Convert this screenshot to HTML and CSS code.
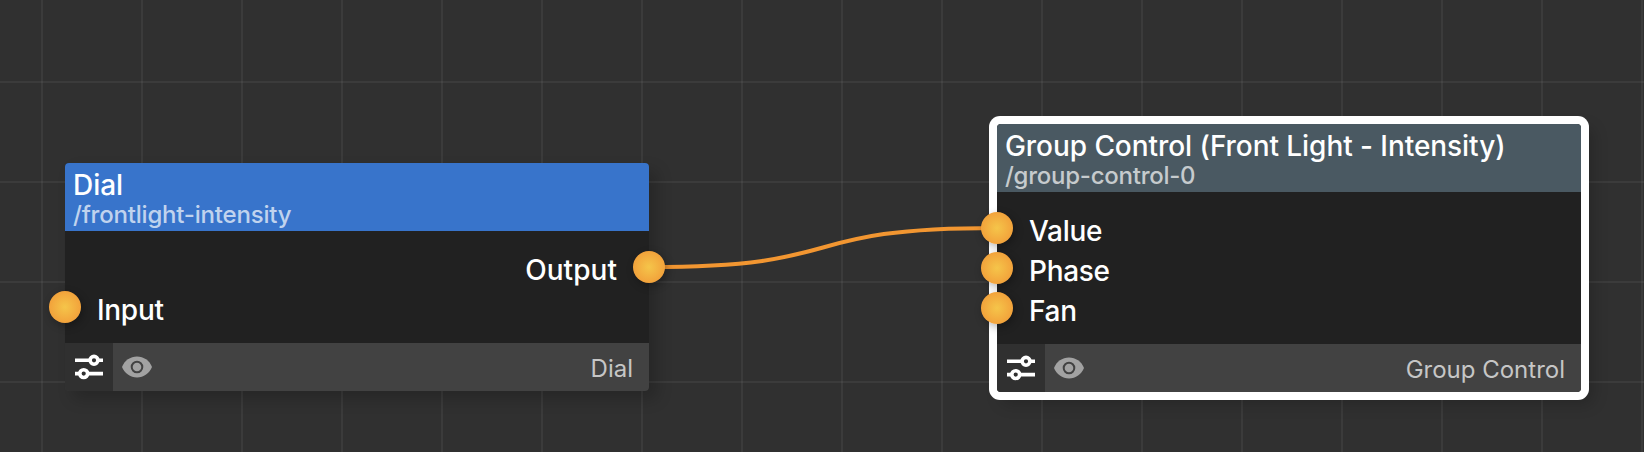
FILE: index.html
```html
<!DOCTYPE html>
<html lang="en">
<head>
<meta charset="utf-8">
<title>Node editor</title>
<link rel="stylesheet" href="styles.css">
</head>
<body>
<svg width="0" height="0" class="defs">
  <symbol id="tune" viewBox="0 0 28 28">
    <g fill="none" stroke="#fff" stroke-width="3.6">
      <path d="M0 7.3H14.5M23.500 7.300H28M0 20.600H4M13 20.600H28"/>
      <circle cx="19" cy="7.3" r="3.9"/>
      <circle cx="8.7" cy="20.6" r="3.9"/>
    </g>
  </symbol>
  <symbol id="eye" viewBox="0 0 30 22">
    <path fill="#a2a2a2" d="M15 .6C8.300 .6 2.500 4.700 0 11c2.500 6.300 8.300 10.400 15 10.400S27.500 17.300 30 11C27.500 4.700 21.700 .6 15 .6z"/>
    <circle cx="15" cy="11" r="5.300" fill="none" stroke="#424242" stroke-width="2"/>
  </symbol>
</svg>
<main class="canvas">
  <svg class="wire" width="1644" height="452"><path d="M649 267C858 267 788 228 997 228"/></svg>

  <section class="node node-dial">
    <header class="head"><div class="title">Dial</div><div class="path path-dial">/frontlight-intensity</div></header>
    <div class="ports">
      <div class="port out"><span class="label">Output</span><i class="socket"></i></div>
      <div class="port"><i class="socket"></i><span class="label">Input</span></div>
    </div>
    <footer class="foot">
      <span class="settings"><svg width="28" height="28"><use href="#tune"/></svg></span>
      <svg class="eye" width="30" height="22"><use href="#eye"/></svg>
      <span class="type">Dial</span>
    </footer>
  </section>

  <section class="node node-group selected">
    <header class="head"><div class="title">Group Control (Front Light - Intensity)</div><div class="path">/group-control-0</div></header>
    <div class="ports">
      <div class="port"><i class="socket"></i><span class="label">Value</span></div>
      <div class="port"><i class="socket"></i><span class="label">Phase</span></div>
      <div class="port"><i class="socket"></i><span class="label">Fan</span></div>
    </div>
    <footer class="foot">
      <span class="settings"><svg width="28" height="28"><use href="#tune"/></svg></span>
      <svg class="eye" width="30" height="22"><use href="#eye"/></svg>
      <span class="type">Group Control</span>
    </footer>
  </section>
</main>
</body>
</html>
```
FILE: styles.css
```css
* { box-sizing: border-box; }
body { margin: 0; font-family: Inter, "Liberation Sans", sans-serif; }
.defs { position: absolute; }
.canvas {
  position: relative;
  width: 1644px;
  height: 452px;
  overflow: hidden;
  background-color: #303030;
  background-image:
    linear-gradient(90deg, rgba(255,255,255,.05) 2px, transparent 2px),
    linear-gradient(rgba(255,255,255,.05) 2px, transparent 2px);
  background-size: 100px 100px;
  background-position: 41px 0, 0 81px;
}
.wire { position: absolute; left: 0; top: 0; }
.wire path { fill: none; stroke: #f29631; stroke-width: 4; }
.node {
  position: absolute;
  width: 584px;
  border-radius: 4px;
  background: #212121;
  box-shadow: 8px 8px 16px rgba(0,0,0,.2);
}
.node-dial { left: 65px; top: 163px; }
.node-group { left: 997px; top: 124px; }
.selected { box-shadow: 0 0 0 8px #fff, 8px 8px 16px 4px rgba(0,0,0,.2); }
.head {
  height: 68px;
  padding: 6px 8px 0;
  border-radius: 4px 4px 0 0;
  background: #3874cb;
  white-space: nowrap;
}
.node-group .head { background: #4a5962; }
.title { font-size: 28px; line-height: 33px; font-weight: 500; letter-spacing: -.06px; color: #fff; }
.path { font-size: 24px; line-height: 26px; font-weight: 500; letter-spacing: -.25px; color: rgba(255,255,255,.7); }
.path-dial { letter-spacing: -.2px; }
.ports { padding: 16px 0; }
.port { display: flex; align-items: center; height: 40px; margin: 0 -16px; gap: 16px; }
.out { justify-content: flex-end; }
.label { font-size: 28px; line-height: 36px; font-weight: 500; letter-spacing: -.3px; color: #fff; padding-top: 5px; }
.out .label { letter-spacing: .05px; }
.socket {
  width: 32px;
  height: 32px;
  border-radius: 50%;
  background: radial-gradient(circle closest-side, #f5c54a, #f2a23b);
  box-shadow: 2px 3px 8px rgba(0,0,0,.3);
}
.foot {
  display: flex;
  align-items: center;
  height: 48px;
  padding-right: 16px;
  border-radius: 0 0 4px 4px;
  background: #424242;
}
.settings { display: grid; place-items: center; width: 48px; height: 48px; background: #303030; border-radius: 0 0 0 4px; }
.eye { margin-left: 9px; }
.type { margin-left: auto; padding-top: 4px; font-size: 24px; line-height: 30px; color: #c6c6c6; }
```
